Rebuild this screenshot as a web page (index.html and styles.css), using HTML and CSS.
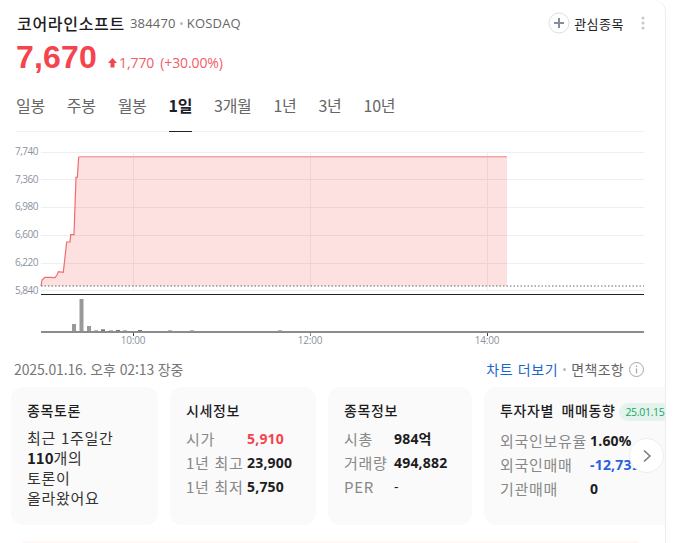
FILE: index.html
```html
<!DOCTYPE html>
<html lang="ko">
<head>
  <meta charset="UTF-8">
  <meta name="viewport" content="width=device-width, initial-scale=1.0">
  <title>코어라인소프트</title>
  <link rel="stylesheet" href="styles.css">
</head>
<body>
  <div class="panel">
    <div class="head">
      <div class="title-row">
        <strong class="name">코어라인소프트</strong>
        <span class="code">384470</span>
        <span class="dot"></span>
        <span class="code">KOSDAQ</span>
        <div class="actions">
          <svg class="plus" width="22" height="22" viewBox="0 0 22 22">
            <circle cx="11" cy="11" r="10" fill="#fff" stroke="#dcdfe3"/>
            <path d="M11 6v10M6 11h10" stroke="#868e9c" stroke-width="2"/>
          </svg>
          <span class="fav">관심종목</span>
          <svg class="more" width="4" height="14" viewBox="0 0 4 14">
            <circle cx="2" cy="2" r="1.500" fill="#c4c8ce"/>
            <circle cx="2" cy="7" r="1.500" fill="#c4c8ce"/>
            <circle cx="2" cy="12" r="1.500" fill="#c4c8ce"/>
          </svg>
        </div>
      </div>
      <div class="price-row">
        <span class="price">7,670</span>
        <svg class="up" width="9" height="10" viewBox="0 0 9 10"><path d="M4.500 0L9 5H6.500V9.500H2.500V5H0z" fill="#f0464f"/></svg>
        <span class="change">1,770</span>
        <span class="change rate">(+30.00%)</span>
      </div>
    </div>

    <div class="tabs">
      <span class="tab">일봉</span>
      <span class="tab">주봉</span>
      <span class="tab">월봉</span>
      <span class="tab active">1일</span>
      <span class="tab">3개월</span>
      <span class="tab">1년</span>
      <span class="tab">3년</span>
      <span class="tab">10년</span>
    </div>

    <svg class="chart" width="665" height="222" viewBox="0 132 665 222">
      <g stroke="#efefef">
        <path d="M41 152.500H644M41 179.500H644M41 207.500H644M41 235.500H644M41 263.500H644M41 290.500H644"/>
        <path d="M133.500 152V290M310.500 152V290M487.500 152V290"/>
      </g>
      <path class="area" d="M41 286L42 280L45 277.300L50 277.300L55 277.700L57 275L58.300 271.700L63.300 272.300L66.700 242L70 242L70.700 234.700L74 234.700L76 177.300L77.300 177.300L78.700 156.700H507V286z"/>
      <path class="line" d="M41 286L42 280L45 277.300L50 277.300L55 277.700L57 275L58.300 271.700L63.300 272.300L66.700 242L70 242L70.700 234.700L74 234.700L76 177.300L77.300 177.300L78.700 156.700"/>
      <path class="top" d="M78.700 156.700H507"/>
      <path class="prev" d="M41 286H644"/>
      <path d="M41 294.500H644" stroke="#222"/>
      <g fill="#999">
        <rect x="72" y="324" width="4" height="8"/>
        <rect x="79.500" y="299" width="4" height="33"/>
        <rect x="87" y="326" width="4" height="6"/>
      </g>
      <g fill="#777">
        <rect x="94" y="330.500" width="4" height="1.500"/>
        <rect x="101" y="329.300" width="4" height="2.700"/>
        <rect x="109" y="330.500" width="4" height="1.500"/>
        <rect x="116" y="330" width="4" height="2"/>
        <rect x="123" y="330.500" width="4" height="1.500"/>
        <rect x="138" y="330" width="4" height="2"/>
        <rect x="168" y="330.500" width="4" height="1.500"/>
        <rect x="190" y="330.500" width="4" height="1.500"/>
        <rect x="278" y="330.500" width="4" height="1.500"/>
      </g>
      <path d="M41 332H644" stroke="#8c8c8c" stroke-width="2"/>
      <path d="M133.500 333V336M487.500 333V336" stroke="#444"/>
      <path d="M310.500 333V336" stroke="#888"/>
      <g class="ylabels">
        <text x="38" y="155">7,740</text>
        <text x="38" y="182.500">7,360</text>
        <text x="38" y="210">6,980</text>
        <text x="38" y="238">6,600</text>
        <text x="38" y="266">6,220</text>
        <text x="38" y="293.500">5,840</text>
      </g>
      <g class="xlabels">
        <text x="133" y="344">10:00</text>
        <text x="310" y="344">12:00</text>
        <text x="487" y="344">14:00</text>
      </g>
    </svg>

    <div class="meta">
      <span class="stamp">2025.01.16. 오후 02:13 장중</span>
      <div class="links">
        <span class="more-chart">차트 더보기</span>
        <span class="dot"></span>
        <span class="notice">면책조항</span>
        <svg width="15" height="15" viewBox="0 0 15 15">
          <circle cx="7.500" cy="7.500" r="7" fill="none" stroke="#a5a5a5"/>
          <path d="M7.500 6.500V11.500M7.500 3.500V5" stroke="#a5a5a5" stroke-width="1.200"/>
        </svg>
      </div>
    </div>

    <div class="cards">
      <div class="card talk">
        <h3>종목토론</h3>
        <p>최근 1주일간<br><b>110</b>개의<br>토론이<br>올라왔어요</p>
      </div>
      <div class="card price-card">
        <h3>시세정보</h3>
        <dl>
          <dt>시가</dt><dd class="red">5,910</dd>
          <dt>1년 최고</dt><dd>23,900</dd>
          <dt>1년 최저</dt><dd>5,750</dd>
        </dl>
      </div>
      <div class="card info-card">
        <h3>종목정보</h3>
        <dl>
          <dt>시총</dt><dd>984억</dd>
          <dt>거래량</dt><dd>494,882</dd>
          <dt>PER</dt><dd class="plain">-</dd>
        </dl>
      </div>
      <div class="card trade-card">
        <h3>투자자별 매매동향<span class="badge">25.01.15</span></h3>
        <dl>
          <dt>외국인보유율</dt><dd>1.60%</dd>
          <dt>외국인매매</dt><dd class="blue">-12,739</dd>
          <dt>기관매매</dt><dd>0</dd>
        </dl>
      </div>
    </div>
    <div class="next-strip"></div>

    <button class="next">
      <svg width="10" height="14" viewBox="0 0 10 14"><path d="M2 1.500L8 7L2 12.500" fill="none" stroke="#777" stroke-width="1.500"/></svg>
    </button>
  </div>
</body>
</html>
```

FILE: styles.css
```css
html, body { margin: 0; padding: 0; background: #fff; overflow: hidden; }
body { font-family: "Open Sans", "Noto Sans CJK KR", sans-serif; color: #1d1d1f; }
.panel { position: relative; box-sizing: border-box; width: 666px; height: 543px; border-right: 1px solid #ececec; border-top-right-radius: 12px; overflow: hidden; }
.head { padding: 12px 0 0 17px; }
.title-row { display: flex; align-items: center; height: 22px; font-size: 13px; }
.name { font-family: "Noto Sans CJK KR", sans-serif; font-size: 16px; font-weight: 500; letter-spacing: .7px; margin-right: 5px; }
.code { color: #666; font-size: 13px; letter-spacing: .2px; }
.dot { display: inline-block; width: 3px; height: 3px; border-radius: 50%; background: #bbb; margin: 0 4px; }
.actions { display: flex; align-items: center; margin-left: auto; margin-right: 20px; }
.fav { font-family: "Noto Sans CJK KR", sans-serif; font-size: 13px; letter-spacing: .5px; margin: 0 17px 0 4px; color: #222; }
.price-row { display: flex; align-items: baseline; margin: 5px 0 0 -1px; height: 40px; }
.price { font-family: "Liberation Sans", sans-serif; font-weight: 700; font-size: 32px; color: #f5444e; letter-spacing: .2px; }
.up { margin-left: 11px; margin-right: 2px; }
.change { font-size: 14px; color: #f25d67; letter-spacing: -.1px; }
.rate { margin-left: 6px; }
.tabs { display: flex; gap: 22px; margin: 12px 20px 0 15px; padding-left: 1px; height: 40px; border-bottom: 1px solid #f3f3f3; }
.tab { font-family: "Noto Sans CJK KR", sans-serif; font-size: 16px; letter-spacing: -.3px; color: #666; height: 41px; line-height: 29px; box-sizing: border-box; }
.tab.active { color: #1d1d2b; font-weight: 700; border-bottom: 1px solid #222; }
.chart { display: block; }
.area { fill: rgba(245, 70, 70, .17); stroke: none; }
.line { fill: none; stroke: #f26b6e; stroke-width: 1.200; }
.top { fill: none; stroke: #f5a5a5; stroke-width: 1.500; }
.prev { fill: none; stroke: #666; stroke-dasharray: 1.500 2; }
.ylabels text { font-size: 10px; fill: #8b929e; text-anchor: end; letter-spacing: -.5px; }
.xlabels text { font-size: 10px; fill: #8b929e; text-anchor: middle; letter-spacing: -.2px; }
.meta { display: flex; align-items: center; justify-content: space-between; height: 30px; padding: 0 21px 0 14px; font-size: 14px; font-family: "Noto Sans CJK KR", sans-serif; }
.stamp { color: #777; letter-spacing: -.12px; }
.links { display: flex; align-items: center; }
.more-chart { color: #1b66c9; letter-spacing: .6px; }
.links .dot { margin: 0 5px; }
.notice { color: #666; margin-right: 5px; letter-spacing: .3px; }
.cards { display: flex; gap: 12px; padding-left: 11px; margin-top: 3px; }
.card { flex: none; box-sizing: border-box; height: 138px; background: #fafafa; border-radius: 12px; padding: 15px 16px; font-family: "Noto Sans CJK KR", sans-serif; }
.talk { width: 147px; }
.price-card { width: 146px; }
.info-card { width: 144px; }
.trade-card { width: 300px; }
h3 { margin: 0 0 9px; font-size: 14px; line-height: 17px; font-weight: 500; letter-spacing: .6px; color: #1d1d1f; white-space: nowrap; }
p { margin: 1px 0 0; font-size: 15px; line-height: 20px; color: #333; letter-spacing: .7px; }
p b { font-weight: 700; color: #1d1d1f; letter-spacing: 0; }
dl { display: grid; column-gap: 5px; row-gap: 3px; margin: 0; font-size: 14px; line-height: 21px; }
.price-card dl { grid-template-columns: 56px max-content; }
.info-card dl { grid-template-columns: 45px max-content; }
.trade-card dl { grid-template-columns: 90px max-content; column-gap: 0; }
.trade-card h3 { word-spacing: 3px; }
dt { color: #888; font-size: 15px; letter-spacing: .7px; white-space: nowrap; }
dd { margin: 0; font-family: "Open Sans", "Noto Sans CJK KR", sans-serif; font-weight: 700; letter-spacing: .2px; color: #1d1d1f; }
dd.red { color: #f5444e; }
dd.blue { color: #2a5fe0; }
dd.plain { font-weight: 400; }
.badge { display: inline-block; font-size: 10.5px; line-height: 18px; font-weight: 500; letter-spacing: -.3px; color: #17a566; background: #e4f4ec; border-radius: 9px; padding: 0 6px; margin-left: 4px; font-family: "Open Sans", sans-serif; }
.next-strip { margin: 16px 25px 0 22px; height: 8px; background: #fff7f4; border-radius: 6px; }
.next { position: absolute; left: 629px; top: 438px; width: 35px; height: 35px; padding: 0; border: 1px solid #eee; border-radius: 50%; background: #fff; display: flex; align-items: center; justify-content: center; }
```
